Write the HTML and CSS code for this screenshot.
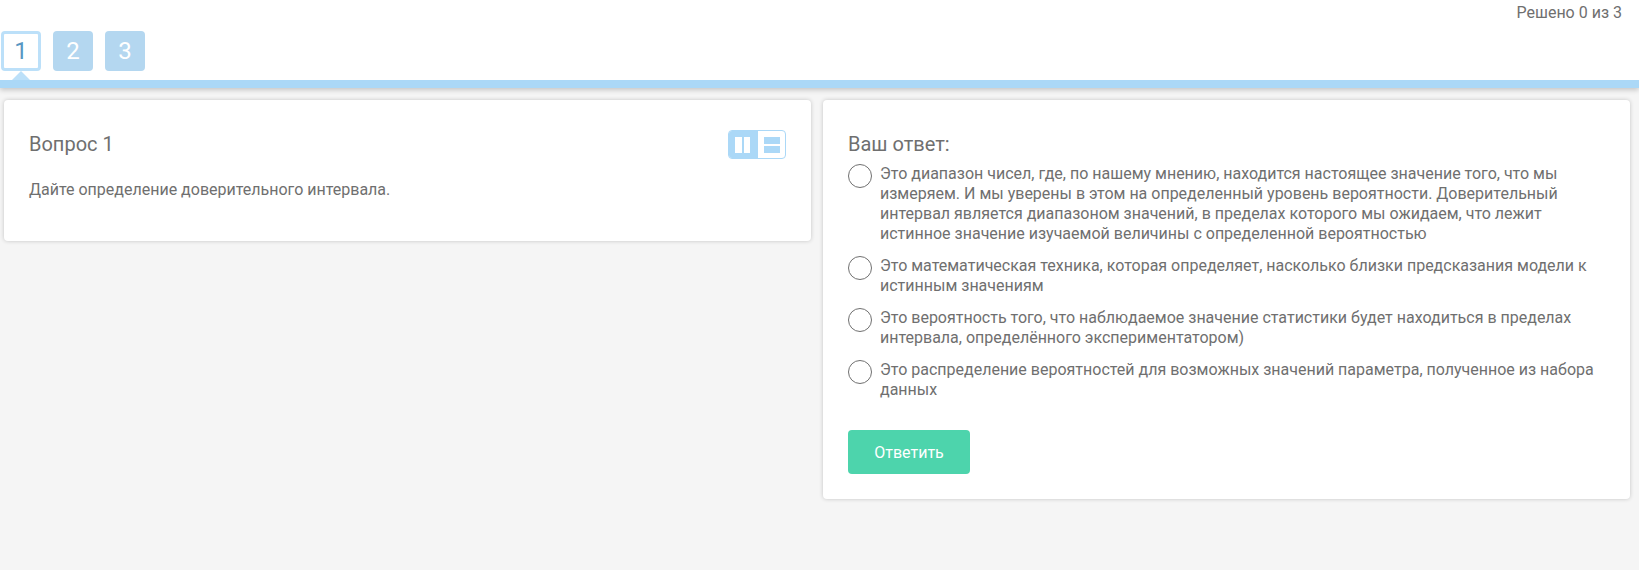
FILE: index.html
```html
<!DOCTYPE html>
<html lang="ru">
<head>
<meta charset="utf-8">
<title>Вопрос 1</title>
<link rel="stylesheet" href="styles.css">
</head>
<body>
<header class="header">
  <div class="progress">Решено 0 из 3</div>
  <nav class="tabs">
    <a class="tab tab-active">1</a>
    <a class="tab">2</a>
    <a class="tab">3</a>
  </nav>
</header>
<main class="columns">
  <section class="card question">
    <div class="question-head">
      <h2 class="title">Вопрос 1</h2>
      <div class="toggle">
        <div class="toggle-item toggle-on">
          <svg width="16" height="16" viewBox="0 0 16 16"><path fill="#fff" d="M0 0h7v16H0zM9 0h6v16H9z"/></svg>
        </div>
        <div class="toggle-item">
          <svg width="16" height="16" viewBox="0 0 16 16"><path fill="#abd8f7" d="M0 0h16v7H0zM0 9h16v7H0z"/></svg>
        </div>
      </div>
    </div>
    <p class="question-text">Дайте определение доверительного интервала.</p>
  </section>
  <section class="card answer">
    <h2 class="title">Ваш ответ:</h2>
    <div class="options">
      <label class="option"><span class="radio"></span><span>Это диапазон чисел, где, по нашему мнению, находится настоящее значение того, что мы измеряем. И мы уверены в этом на определенный уровень вероятности. Доверительный интервал является диапазоном значений, в пределах которого мы ожидаем, что лежит истинное значение изучаемой величины с определенной вероятностью</span></label>
      <label class="option"><span class="radio"></span><span>Это математическая техника, которая определяет, насколько близки предсказания модели к истинным значениям</span></label>
      <label class="option"><span class="radio"></span><span>Это вероятность того, что наблюдаемое значение статистики будет находиться в пределах интервала, определённого экспериментатором)</span></label>
      <label class="option"><span class="radio"></span><span>Это распределение вероятностей для возможных значений параметра, полученное из набора данных</span></label>
    </div>
    <button class="submit">Ответить</button>
  </section>
</main>
</body>
</html>
```
FILE: styles.css
```css
* { box-sizing: border-box; }
html { height: 100%; }
body {
  margin: 0;
  min-height: 100%;
  background: #f5f5f5;
  color: #6f6f6f;
  font: 16px/20px Roboto, "Open Sans", sans-serif;
}
.header {
  height: 88px;
  background: #fff;
  border-bottom: 8px solid #abd8f7;
  box-shadow: 0 2px 5px rgba(0, 0, 0, .2);
}
.progress {
  height: 31px;
  padding: 3px 17px 0 0;
  text-align: right;
}
.tabs {
  display: flex;
  gap: 12px;
  padding-left: 1px;
}
.tab {
  width: 40px;
  height: 40px;
  border-radius: 4px;
  background: #b4d7f0;
  color: #fff;
  font-size: 24px;
  line-height: 40px;
  text-align: center;
}
.tab-active {
  position: relative;
  border: 3px solid #bce0f9;
  background: #fff;
  color: #5897c3;
  line-height: 34px;
}
.tab-active::after {
  content: "";
  position: absolute;
  top: 37px;
  left: 8px;
  border: 9px solid transparent;
  border-top: 0;
  border-bottom-color: #bce0f9;
}
.columns {
  display: flex;
  align-items: flex-start;
  gap: 12px;
  padding: 12px 9px 0 4px;
}
.card {
  flex: 1;
  min-width: 0;
  border-radius: 4px;
  background: #fff;
  box-shadow: 0 0 4px rgba(0, 0, 0, .2);
}
.question {
  height: 141px;
  padding: 30px 25px;
}
.question-head {
  display: flex;
  justify-content: space-between;
  height: 50px;
}
.title {
  margin: 0;
  font-size: 20px;
  font-weight: 400;
  line-height: 28px;
}
.toggle {
  display: flex;
  width: 58px;
  height: 29px;
  border: 1px solid #abd8f7;
  border-radius: 4px;
  overflow: hidden;
}
.toggle-item {
  flex: 1;
  padding: 6px 0 0 6px;
}
.toggle-on {
  flex: 0 0 29px;
  background: #abd8f7;
}
.toggle svg { display: block; }
.question-text { margin: 0; }
.answer {
  height: 399px;
  padding: 30px 25px;
}
.options {
  display: grid;
  gap: 12px;
  padding-top: 6px;
}
.option {
  display: flex;
  gap: 8px;
}
.radio {
  flex: 0 0 24px;
  height: 24px;
  border: 1px solid #707070;
  border-radius: 50%;
}
.submit {
  display: block;
  width: 122px;
  height: 44px;
  margin-top: 30px;
  padding: 1px 0 0;
  border: 0;
  border-radius: 4px;
  background: #4dd4ac;
  color: #fff;
  font: 400 16px/43px Roboto, sans-serif;
}
```
